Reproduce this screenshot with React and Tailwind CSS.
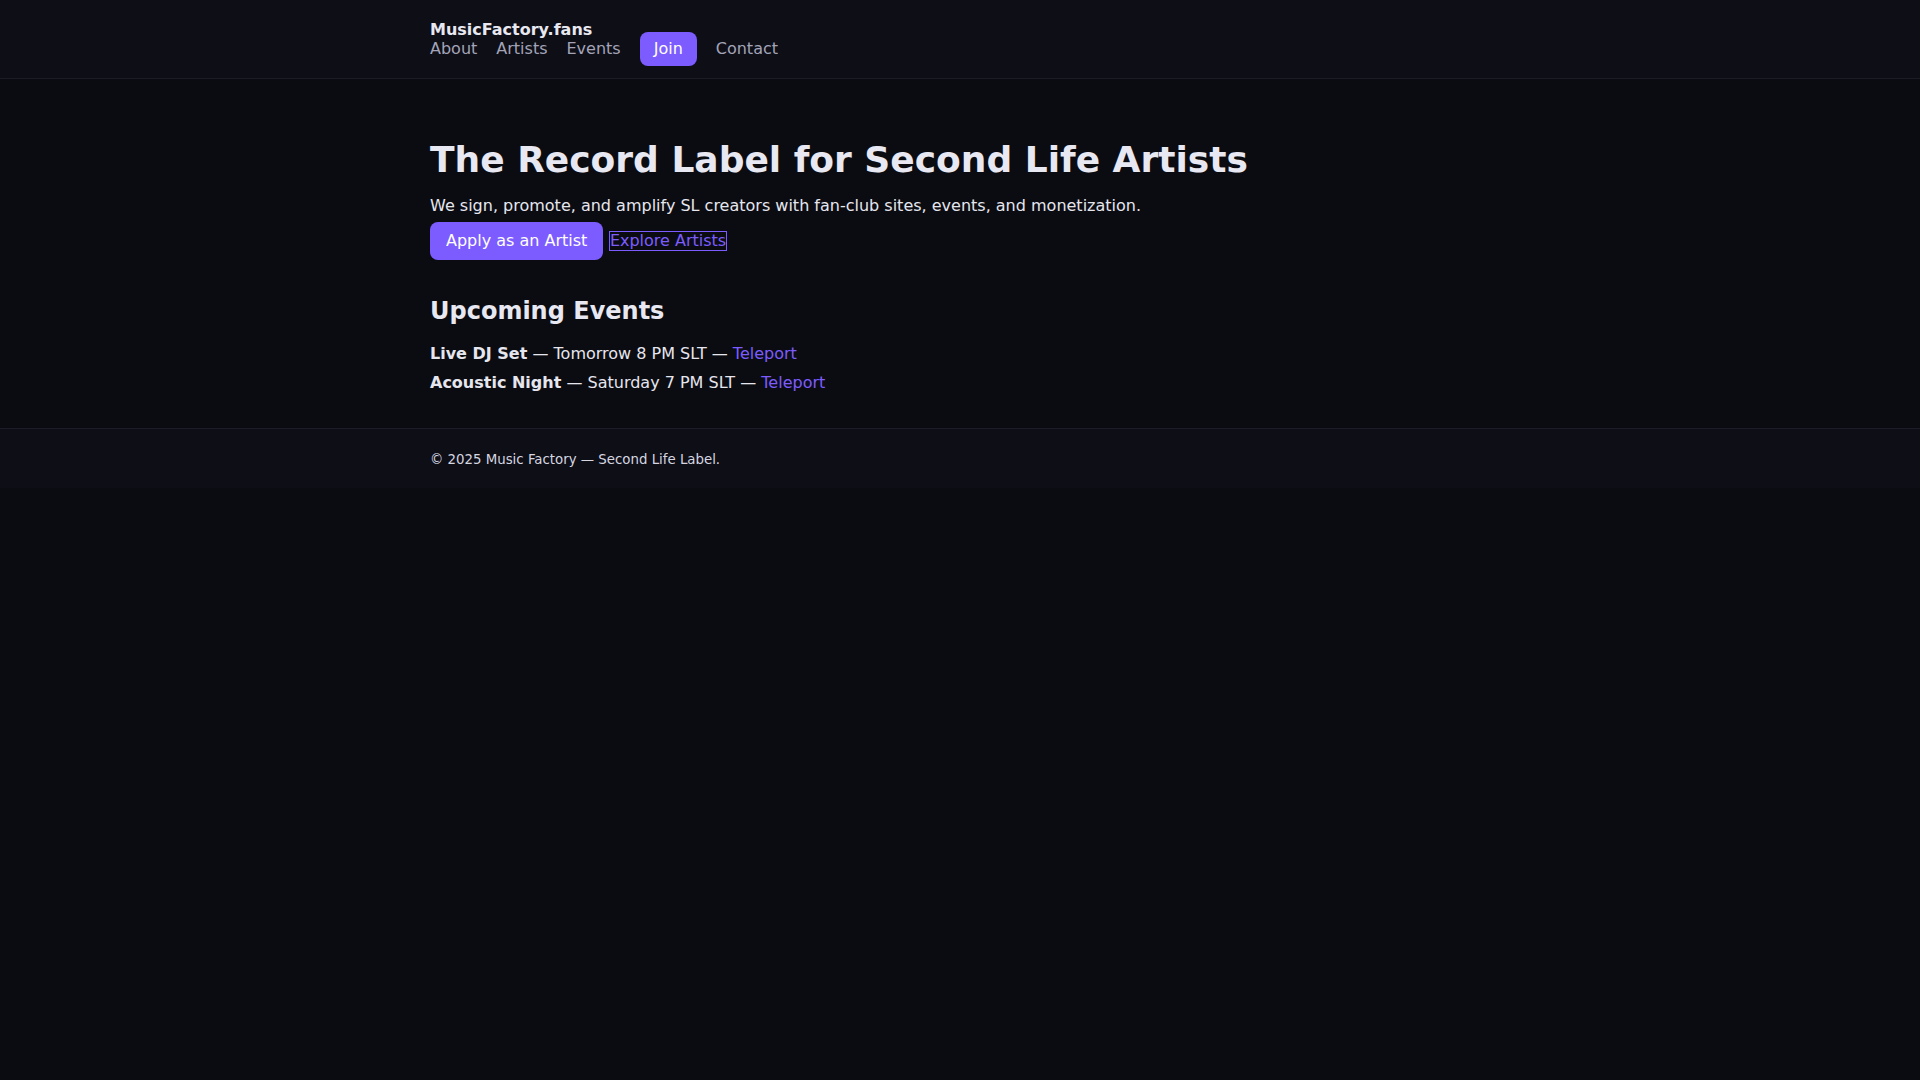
export default function App() {
  return (
    <div className="min-h-screen bg-[#0b0c11] text-[#e6e6ef] font-['DejaVu_Sans',sans-serif]">
      {/* Header */}
      <header className="bg-[#0e0e17] border-b border-[#1c1c28]">
        <div className="max-w-[1100px] mx-auto px-5 pt-[20px] pb-[12px]">
          <div className="text-base font-bold leading-[19px] text-[#e8e8f1]">MusicFactory.fans</div>
          <nav className="-mt-[7px] flex items-center gap-[19px] h-[34px] text-base leading-6 text-[#a3a4b8]">
            <a href="#about">About</a>
            <a href="#artists">Artists</a>
            <a href="#events">Events</a>
            <a href="#join" className="px-[14px] py-[5px] rounded-lg bg-[#7c5cff] text-white">
              Join
            </a>
            <a href="#contact">Contact</a>
          </nav>
        </div>
      </header>

      {/* Hero + events */}
      <main className="max-w-[1100px] mx-auto px-5 pt-[59px] pb-[33px]">
        <h1 className="text-4xl font-bold leading-[1.2] text-[#e8e8f2]">
          The Record Label for Second Life Artists
        </h1>
        <p className="mt-[13px] text-base leading-6">
          We sign, promote, and amplify SL creators with fan-club sites, events, and monetization.
        </p>
        <div className="mt-1 flex items-center gap-[5.5px]">
          <a href="#apply" className="px-4 py-[7px] leading-6 rounded-lg bg-[#7c5cff] text-white">
            Apply as an Artist
          </a>
          <a href="#artists" className="border border-[#7c5cff] leading-[18.5px] text-[#7c5cff]">
            Explore Artists
          </a>
        </div>

        <h2 className="mt-[36.5px] text-2xl font-bold leading-[1.2] text-[#e8e8f2]">Upcoming Events</h2>
        <ul className="mt-[17px] flex flex-col gap-[5px] text-base leading-6">
          <li>
            <span className="font-bold">Live DJ Set</span> — Tomorrow 8 PM SLT —{" "}
            <a href="#tp1" className="text-[#7c5cff]">Teleport</a>
          </li>
          <li>
            <span className="font-bold">Acoustic Night</span> — Saturday 7 PM SLT —{" "}
            <a href="#tp2" className="text-[#7c5cff]">Teleport</a>
          </li>
        </ul>
      </main>

      {/* Footer */}
      <footer className="bg-[#0e0e17] border-t border-[#1c1c28]">
        <div className="max-w-[1100px] mx-auto px-5 pt-[21px] pb-[18px] text-[13.33px] leading-[20px] text-[#d6d6e0]">
          © 2025 Music Factory — Second Life Label.
        </div>
      </footer>
    </div>
  );
}
